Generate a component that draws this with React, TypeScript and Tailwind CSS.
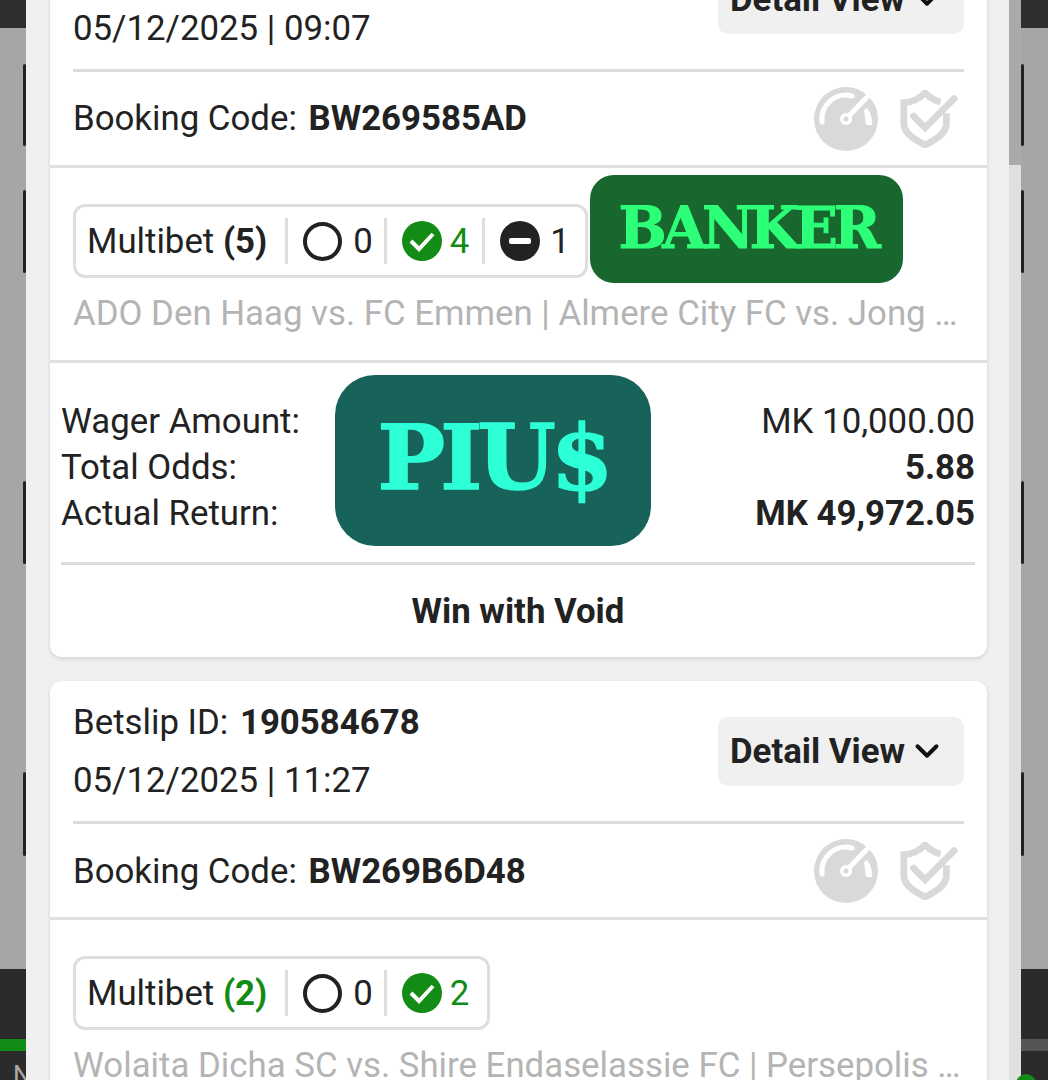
import { ChevronDown } from 'lucide-react';

const SANS = "font-['Roboto',sans-serif]";

function GaugeIcon() {
  return (
    <svg width="66" height="66" viewBox="0 0 66 66">
      <circle cx="33" cy="33" r="32" fill="#d9d9d9" />
      <path d="M9 36 A24 24 0 0 1 39 10" fill="none" stroke="#fff" strokeWidth="5" strokeLinecap="round" />
      <path d="M33 33 L57 8" stroke="#fff" strokeWidth="5" />
      <path d="M51 24 L54 22 A25 25 0 0 1 59 39 L53 39 Z" fill="#fff" />
      <circle cx="33" cy="33" r="6" fill="#fff" />
      <circle cx="33" cy="33" r="2.5" fill="#d9d9d9" />
    </svg>
  );
}

function ShieldIcon() {
  return (
    <svg width="58" height="58" viewBox="0 0 60 60">
      <path
        d="M48 24 V35 C48 45 36 52 26 57 C16 52 4 45 4 35 V13 C12 13 20 9 26 3 C31 8 36 11 42 12.5"
        fill="none"
        stroke="#d9d9d9"
        strokeWidth="7"
      />
      <path d="M14 27 L26 39 L56 9" fill="none" stroke="#d9d9d9" strokeWidth="7" strokeLinecap="round" />
    </svg>
  );
}

function EmptyCircle() {
  return <span className="h-[39px] w-[39px] rounded-full border-[4px] border-[#222222]" />;
}

function CheckCircle() {
  return (
    <svg width="40" height="40" viewBox="0 0 40 40">
      <circle cx="20" cy="20" r="20" fill="#128c14" />
      <path d="M9 20 L17 28 L31 13" fill="none" stroke="#fff" strokeWidth="4" />
    </svg>
  );
}

function MinusCircle() {
  return (
    <svg width="40" height="40" viewBox="0 0 40 40">
      <circle cx="20" cy="20" r="20" fill="#222222" />
      <rect x="9" y="17" width="22" height="6" rx="2" fill="#fff" />
    </svg>
  );
}

function Sep() {
  return <span className="mr-[15px] ml-[11px] h-[46px] w-[3px] bg-[#dedede]" />;
}

interface CardProps {
  id?: string;
  date: string;
  code: string;
  legs: number;
  won: number;
  voided?: number;
  matches: string;
  wager?: boolean;
}

function Card({ id, date, code, legs, won, voided, matches, wager }: CardProps) {
  return (
    <div className="overflow-hidden rounded-[12px] bg-white shadow-[0_2px_4px_rgba(0,0,0,0.12)]">
      {/* Header */}
      <div className="px-[23px]">
        <div className="box-content flex h-[140px] items-center justify-between border-b-[3px] border-[#dcdcdc]">
          <div className="flex flex-col gap-[22px]">
            <div className="h-[36px] leading-[36px] whitespace-nowrap">
              {id && (
                <>
                  Betslip ID: <span className="ml-[3px] font-bold">{id}</span>
                </>
              )}
            </div>
            <div className="h-[36px] leading-[36px] whitespace-nowrap">{date}</div>
          </div>
          <button className="flex h-[69px] w-[246px] items-center rounded-[10px] bg-[#f0f0f0] pl-[12px] font-bold text-[#222222]">
            Detail View
            <ChevronDown className="ml-[3px]" size={38} strokeWidth={2.5} color="#111111" />
          </button>
        </div>
        <div className="flex h-[93px] items-center justify-between">
          <div className="whitespace-nowrap">
            Booking Code: <span className="ml-[3px] font-bold">{code}</span>
          </div>
          <div className="mr-[6px] flex items-center gap-[21px]">
            <GaugeIcon />
            <ShieldIcon />
          </div>
        </div>
      </div>
      <div className="h-[3px] bg-[#e0e0e0]" />

      {/* Bet summary */}
      <div className="px-[23px] pt-[36px] pb-[21px]">
        <div
          className={
            voided
              ? 'inline-flex h-[74px] items-center rounded-[12px] border-[3px] border-[#dedede] pr-[15px] pl-[11px]'
              : 'inline-flex h-[74px] items-center rounded-[12px] border-[3px] border-[#dedede] pr-[18px] pl-[11px]'
          }
        >
          <span className="mr-[7px]">
            Multibet <span className={voided ? 'font-bold' : 'font-bold text-[#128c14]'}>({legs})</span>
          </span>
          <Sep />
          <EmptyCircle />
          <span className="ml-[11px]">0</span>
          <Sep />
          <CheckCircle />
          <span className="ml-[8px] text-[#128c14]">{won}</span>
          {voided && (
            <>
              <span className="w-[2px]" />
              <Sep />
              <MinusCircle />
              <span className="ml-[10px]">{voided}</span>
            </>
          )}
        </div>
        <div className="mt-[9px] truncate text-[#b4b4b4]">{matches}</div>
      </div>

      {wager && (
        <>
          <div className="h-[3px] bg-[#e0e0e0]" />
          <div className="pr-[12px] pl-[11px]">
            <div className="flex justify-between border-b-[3px] border-[#dcdcdc] pt-[35px] pb-[26px] leading-[46px]">
              <div>
                <div>Wager Amount:</div>
                <div>Total Odds:</div>
                <div>Actual Return:</div>
              </div>
              <div className="text-right">
                <div>MK 10,000.00</div>
                <div className="font-bold">5.88</div>
                <div className="font-bold">MK 49,972.05</div>
              </div>
            </div>
            <div className="flex h-[92px] items-center justify-center pb-[1px] font-bold">Win with Void</div>
          </div>
        </>
      )}
    </div>
  );
}

function Backdrop({ side }: { side: 'left' | 'right' }) {
  const slivers = side === 'left' ? 'right-0 w-[3px]' : 'left-0 w-[3px]';
  return (
    <div className={side === 'left' ? 'relative flex w-[26px] shrink-0 flex-col' : 'relative flex w-[27px] shrink-0 flex-col'}>
      <div className="h-[28px] bg-[#2e2e2e]" />
      <div className="flex-1 bg-[#a6a6a6]" />
      <div className="h-[70px] bg-[#2b2b2b]" />
      <div className={side === 'left' ? 'h-[12px] bg-[#128c14]' : 'h-[12px] bg-[#555555]'} />
      <div className="h-[29px] bg-[#2b2b2b]" />
      <div className={`absolute top-[64px] h-[82px] rounded-[3px] bg-[#222222] ${slivers}`} />
      <div className={`absolute top-[190px] h-[83px] rounded-[3px] bg-[#222222] ${slivers}`} />
      <div className={`absolute top-[481px] h-[83px] rounded-[3px] bg-[#222222] ${slivers}`} />
      <div className={`absolute top-[772px] h-[84px] rounded-[3px] bg-[#222222] ${slivers}`} />
      {side === 'left' ? (
        <span className="absolute top-[1060px] left-[13px] text-[26px] leading-[30px] text-[#aaaaaa]">N</span>
      ) : (
        <span className="absolute top-[1074px] left-[-5px] h-[20px] w-[20px] rounded-full bg-[#128c14]" />
      )}
    </div>
  );
}

export default function App() {
  return (
    <div className={`${SANS} flex h-[1080px] w-[1048px] overflow-hidden text-[34.8px] text-[#222222]`}>
      <Backdrop side="left" />

      {/* Modal */}
      <div className="relative flex min-w-0 flex-1 bg-[#f0f0f0]">
        <div className="flex h-[1080px] w-[983px] flex-col overflow-hidden pr-[22px] pl-[24px]">
          <div className="-mt-[71px] flex shrink-0 flex-col gap-[24px]">
            <Card
              date="05/12/2025 | 09:07"
              code="BW269585AD"
              legs={5}
              won={4}
              voided={1}
              matches="ADO Den Haag vs. FC Emmen | Almere City FC vs. Jong AZ Alkmaar"
              wager
            />
            <Card
              id="190584678"
              date="05/12/2025 | 11:27"
              code="BW269B6D48"
              legs={2}
              won={2}
              matches="Wolaita Dicha SC vs. Shire Endaselassie FC | Persepolis FC vs. Esteghlal"
            />
          </div>
        </div>
        {/* Scrollbar */}
        <div className="flex w-[12px] flex-col bg-[#e0e0e0]">
          <div className="h-[165px] bg-[#aaaaaa]" />
        </div>

        {/* Stickers laid over the slip */}
        <div className="absolute top-[175px] left-[564px] flex h-[108px] w-[313px] items-center justify-center rounded-[24px] bg-[#17672f] pb-[2px] pl-[2px] font-['DejaVu_Serif',serif] text-[57px] font-bold tracking-[-4.5px] text-[#2dff78] [-webkit-text-stroke:1px_#2dff78]">
          BANKER
        </div>
        <div className="absolute top-[375px] left-[309px] flex h-[171px] w-[316px] items-center justify-center rounded-[40px] bg-[#17635a] pb-[6px] font-['DejaVu_Serif',serif] text-[90px] font-bold tracking-[-5px] text-[#2dffd6] [-webkit-text-stroke:1.5px_#2dffd6]">
          PIU$
        </div>
      </div>

      <Backdrop side="right" />
    </div>
  );
}
